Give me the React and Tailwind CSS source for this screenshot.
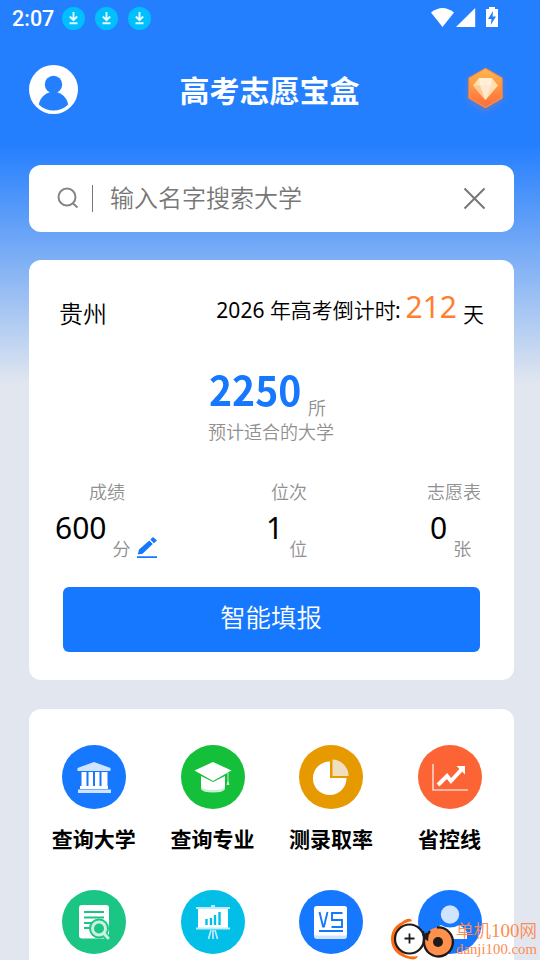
const cjk = "font-['Noto_Sans','Noto_Sans_CJK_SC',sans-serif]";
const cjkLight = "font-['Noto_Sans_CJK_SC',sans-serif] font-[350]";

function DownloadBadge() {
  return (
    <svg className="size-[23px]" viewBox="0 0 23 23" fill="none">
      <circle cx="11.5" cy="11.5" r="11.5" fill="#00bfff" />
      <path d="M11.5 5v8M7.800 9.500l3.700 3.700 3.700-3.700M7.500 16.200h8" stroke="#e8faff" strokeWidth="1.900" />
    </svg>
  );
}

function StatusBar() {
  return (
    <div className="flex h-[37px] items-center pl-3 pr-[42px] text-white">
      <span className="w-[50px] whitespace-nowrap font-['Roboto',sans-serif] text-[21.5px] font-medium leading-6">2:07</span>
      <div className="flex gap-[10px]">
        <DownloadBadge />
        <DownloadBadge />
        <DownloadBadge />
      </div>
      <svg className="-mt-[2px] ml-auto h-[21px] w-[67px]" viewBox="431 7 67 21" fill="#fff">
        <path d="M431 12.500Q442.500 3.500 454 12.500L442.500 27Z" />
        <path d="M475.200 8v19H456Z" />
        <path d="M489 7h6v2h3v18h-12V9h3Z" />
        <path d="m493 11-5 8h3.500l-.8 6 5.300-8.500h-3.400Z" fill="#247fff" />
      </svg>
    </div>
  );
}

function Header() {
  return (
    <header className="flex h-[128px] items-center justify-between pl-[29px] pr-[30px] pb-[23px]">
      <svg className="size-[49px]" viewBox="0 0 49 49">
        <circle cx="24.500" cy="24.500" r="24.500" fill="#fff" />
        <circle cx="24.500" cy="19.500" r="8.700" fill="#247fff" />
        <path d="M9.800 39.500C11.500 32 16 28.500 21.500 27h6C33 28.500 37.500 32 39.200 39.500 31 47.500 18 47.500 9.800 39.500Z" fill="#247fff" />
      </svg>
      <h1 className="-mt-[2px] whitespace-nowrap font-['Noto_Sans_CJK_SC',sans-serif] text-[30px] font-bold leading-[44px] text-white">高考志愿宝盒</h1>
      <svg className="-mt-[2px] size-[49px] overflow-visible" viewBox="461 64 49 49">
        <defs>
          <linearGradient id="gem" x1="0" y1="0" x2="0" y2="1">
            <stop stopColor="#ffb94c" />
            <stop offset="1" stopColor="#ff6b38" />
          </linearGradient>
          <filter id="glow" x="-40%" y="-40%" width="180%" height="180%"><feGaussianBlur stdDeviation="3" /></filter>
        </defs>
        <path d="m485.500 71 17 9v20l-17 11-17-11V80Z" fill="#ff7445" opacity=".35" filter="url(#glow)" />
        <path d="m485.500 68.500 16.500 9.500v20l-16.500 9.500L469 98V78Z" fill="url(#gem)" stroke="#ff9140" strokeWidth="1.200" strokeLinejoin="round" />
        <path d="M479 78h13l6 7.500L485.500 100 473 85.500Z" fill="#ffdfaf" />
        <path d="M479 78h13l-1 7.500h-11Z" fill="#fff0d7" />
        <path d="M480 85.500h11L485.500 100Z" fill="#ffe9d0" />
        <path d="m473 85.500 7 0 5.500 14.500Z" fill="#ffc997" />
      </svg>
    </header>
  );
}

function SearchBar() {
  return (
    <div className="mx-[29px] flex h-[67px] w-[485px] items-center rounded-[12px] bg-white pl-7 pr-7">
      <svg className="-mt-px size-[22px]" viewBox="0 0 22 22" fill="none" stroke="#858585" strokeWidth="2">
        <circle cx="10" cy="10" r="8.500" />
        <path d="m15.500 16 5 4.500" />
      </svg>
      <span className="ml-[13px] h-[27px] w-px bg-[#777]" />
      <span className={`ml-[17px] -mt-[3px] text-[24px] leading-[34px] text-[#777] ${cjkLight}`}>输入名字搜索大学</span>
      <svg className="ml-auto size-[23px]" viewBox="0 0 23 23" fill="none" stroke="#777" strokeWidth="2">
        <path d="m1.500 1.500 20 20m0-20-20 20" />
      </svg>
    </div>
  );
}

function Stat({ label, value, unit, className, labelClass, children }) {
  return (
    <div className={className}>
      <div className={`-mt-px mb-px text-[18px] leading-[26px] text-[#909090] ${cjkLight} ${labelClass}`}>{label}</div>
      <div className="flex h-[54px] items-start">
        <span className="pt-[3px] text-[30px] leading-[40px] text-black">{value}</span>
        <span className={`ml-[6px] pt-[30px] text-[18px] leading-[26px] text-[#909090] ${cjkLight}`}>{unit}</span>
        {children}
      </div>
    </div>
  );
}

function ScoreCard() {
  return (
    <section className={`mx-[29px] mt-7 h-[420px] w-[485px] rounded-[12px] bg-white ${cjk}`}>
      <div className="flex h-[100px] items-start pl-[30px] pr-[30px] pt-[27px]">
        <span className={`pt-[8px] text-[24px] leading-[36px] text-black ${cjkLight}`}>贵州</span>
        <div className="ml-auto flex items-start whitespace-nowrap text-black">
          <span className="pt-[7px] text-[21px] leading-[30px]">2026 <span className={cjkLight}>年高考倒计时</span><span className="-ml-px">:</span></span>
          <span className="ml-[5px] text-[30px] leading-[40px] text-[#ff7f32]">212</span>
          <span className={`ml-[6px] pt-[11px] text-[21px] leading-[30px] ${cjkLight}`}>天</span>
        </div>
      </div>
      <div className="flex h-[58px] items-start pl-[180px]">
        <span className="w-[93px] origin-left scale-x-[.955] font-['Noto_Sans_CJK_SC',sans-serif] text-[41px] font-bold leading-[56px] text-[#1677ff]">2250</span>
        <span className={`ml-[6px] pt-[34px] text-[18px] leading-[26px] text-[#909090] ${cjkLight}`}>所</span>
      </div>
      <div className={`pr-px text-center text-[18px] leading-[26px] text-[#909090] ${cjkLight}`}>预计适合的大学</div>
      <div className="mt-[35px] flex h-[80px]">
        <Stat className="w-[211px] pl-[26px]" labelClass="pl-[34px]" label="成绩" value="600" unit="分">
          <svg className="ml-[7px] mt-[32px] h-[22px] w-5" viewBox="0 0 20 22" fill="#1677ff">
            <path d="M0 19.300h20v1.700H0ZM.800 17.500 2 12.500 12.300 3.500 15.800 7 5.500 16.800ZM13.300 2.600 16 0l4 3.600-3.100 2.700Z" />
          </svg>
        </Stat>
        <Stat className="w-[164px] pl-[26px]" labelClass="pl-[5px]" label="位次" value="1" unit="位" />
        <Stat className="w-[110px] pl-[26px]" labelClass="-ml-[3px]" label="志愿表" value="0" unit="张" />
      </div>
      <button className={`ml-[34px] mt-[28px] flex h-[65px] w-[417px] items-center justify-center rounded-[6px] bg-[#1677ff] pb-[7px] pr-px text-[25.400px] leading-[36px] text-white ${cjkLight}`}>智能填报</button>
    </section>
  );
}

function Bank() {
  return (
    <>
      <path d="m32 17 16.500 6v3h-33v-3Z" fill="#d1e4ff" />
      <path d="M19.500 27h26v14h-26zM18 41h28v3H18z" fill="#fff" />
      <path d="M24.500 27h2v14h-2zm6.500 0h2v14h-2zm6.500 0h2v14h-2z" fill="#1677ff" />
      <path d="M16 44.500h33V48H16Z" fill="#d1e4ff" />
    </>
  );
}

function Cap() {
  return (
    <>
      <path d="M20 31v12q0 4 12 4t12-4V31l-12 6Z" fill="#fff" />
      <path d="M20 42v2q2 3.500 12 3.500T44 44v-2q-2 3-12 3t-12-3Z" fill="#c8efcf" />
      <path d="m32 17 18.500 8.500L32 36l-18.500-10.500Z" fill="#fff" />
      <path d="M46.500 28v8l-1 4h3l-1-4v-8Z" fill="#c8efcf" />
    </>
  );
}

function Pie() {
  return (
    <>
      <path d="M31 16.500V33h16.500A16.800 16.800 0 1 1 31 16.500Z" fill="#fff" />
      <path d="M33.500 14.500A16.500 16.500 0 0 1 49.500 31h-16Z" fill="#f0dfbe" />
    </>
  );
}

function Trend() {
  return (
    <>
      <path d="M15 19v26h35" fill="none" stroke="#ffd0c2" strokeWidth="1.700" />
      <path d="m20 40 9-9 4 5 11-12" fill="none" stroke="#fff" strokeWidth="4" />
      <path d="M38.500 21H47v8.500Z" fill="#fff" />
    </>
  );
}

function Report() {
  return (
    <>
      <rect x="17" y="15" width="30" height="33.500" rx="3" fill="#fff" />
      <path d="M22 22h20M22 27.500h20M22 33h8M22 38h6" stroke="#1bc583" strokeWidth="2" />
      <circle cx="37" cy="38.500" r="10" fill="#1bc583" />
      <path d="m40 42 7 7" stroke="#1bc583" strokeWidth="6" />
      <circle cx="37" cy="38.500" r="6.500" fill="none" stroke="#cbf0e0" strokeWidth="3" />
      <path d="m41.500 43 4.500 5" stroke="#cbf0e0" strokeWidth="3" strokeLinecap="round" />
    </>
  );
}

function Board() {
  return (
    <>
      <path d="M17 18h30v20H17Z" fill="#fff" />
      <path d="M15 17h34v2H15zM15 37.500h34v2H15zM30 15h4v2h-4z" fill="#bcecf7" />
      <path d="M25.500 35v-6M30 35v-7M34 35v-10M38.500 35V22" stroke="#02bfe8" strokeWidth="2.400" />
      <path d="m30 40-2.500 9M34 40l2.500 9M32 40v9" stroke="#bcecf7" strokeWidth="1.700" />
    </>
  );
}

function Versus() {
  return (
    <>
      <rect x="15" y="17" width="33" height="32" rx="3" fill="#d1e4ff" />
      <rect x="15" y="16" width="33" height="29.500" rx="2.500" fill="#fff" />
      <path d="m20.500 22 3.500 14.500h1L28.500 22M43.500 23H33v7h10v7H32.500M20 41h24" fill="none" stroke="#1677ff" strokeWidth="1.900" />
    </>
  );
}

function Person() {
  return (
    <>
      <circle cx="32" cy="24.500" r="9.200" fill="#d1e4ff" />
      <path d="M15 49v-5q0-5 8-9 4 2.500 9 2.500t9-2.500q8 4 8 9v5Z" fill="#fff" />
    </>
  );
}

const tools = [
  { label: "查询大学", color: "#1677ff", Icon: Bank },
  { label: "查询专业", color: "#14bf3a", Icon: Cap },
  { label: "测录取率", color: "#e69a00", Icon: Pie },
  { label: "省控线", color: "#fc6335", Icon: Trend },
  { label: "", color: "#1bc583", Icon: Report },
  { label: "", color: "#02bfe8", Icon: Board },
  { label: "", color: "#1677ff", Icon: Versus },
  { label: "", color: "#1677ff", Icon: Person },
];

function ToolGrid() {
  return (
    <section className="mx-[29px] mt-[29px] grid h-[251px] w-[485px] grid-cols-[repeat(4,118.600px)] grid-rows-[145px_145px] overflow-hidden rounded-t-[12px] bg-white pl-[6px] pt-9">
      {tools.map(({ label, color, Icon }, i) => (
        <div key={i} className="flex flex-col items-center">
          <svg className="size-16" viewBox="0 0 64 64">
            <circle cx="32" cy="32" r="32" fill={color} />
            <Icon />
          </svg>
          <span className="mt-[14px] pr-px font-['Noto_Sans_CJK_SC',sans-serif] text-[21px] font-bold leading-[30px] text-black">{label}</span>
        </div>
      ))}
    </section>
  );
}

function SiteMark() {
  return (
    <div className="absolute bottom-0 right-0 flex h-[44px] w-[150px] text-[#ff8b50]">
      <svg className="h-[44px] w-[66px] shrink-0" viewBox="390 916 66 44" fill="none">
        <path d="M412 921c-1-4-7-2-10 1-7 3-11 10-11 17 0 11 8 18 19 20 4 1 7 0 8-3-13 3-22-6-23-16-1-9 6-17 17-19Z" fill="#ff6b12" />
        <circle cx="409.500" cy="939" r="14.500" fill="#fff" stroke="#211a1b" strokeWidth="2.200" />
        <path d="M404.500 938.500h10m-5-5v10" stroke="#211a1b" strokeWidth="1.800" />
        <circle cx="438.500" cy="942" r="14.500" fill="#ff914d" />
        <path d="M437 927.500a14.500 14.500 0 1 1-10 5.500M423 931c0 3 1 6 4 8 0-4 1-6 3-8" stroke="#211a1b" strokeWidth="2.400" />
        <circle cx="438" cy="942" r="5" fill="#211a1b" />
      </svg>
      <div className="whitespace-nowrap">
        <div className="mt-[2px] font-['Noto_Sans_CJK_SC',sans-serif] text-[17.500px] font-[350] leading-[24px]">单机<span className="font-['Liberation_Serif',serif] text-[19px]">100</span>网</div>
        <div className="font-['Liberation_Serif',serif] text-[14.800px] leading-[12px]">danji100.com</div>
      </div>
    </div>
  );
}

export default function App() {
  return (
    <main className="relative h-[960px] w-[540px] overflow-hidden bg-[#e2e7ef] bg-[linear-gradient(180deg,#247fff_0px,#247fff_145px,#68a3f7_232px,#e2e7ef_385px)]">
      <StatusBar />
      <Header />
      <SearchBar />
      <ScoreCard />
      <ToolGrid />
      <SiteMark />
    </main>
  );
}
